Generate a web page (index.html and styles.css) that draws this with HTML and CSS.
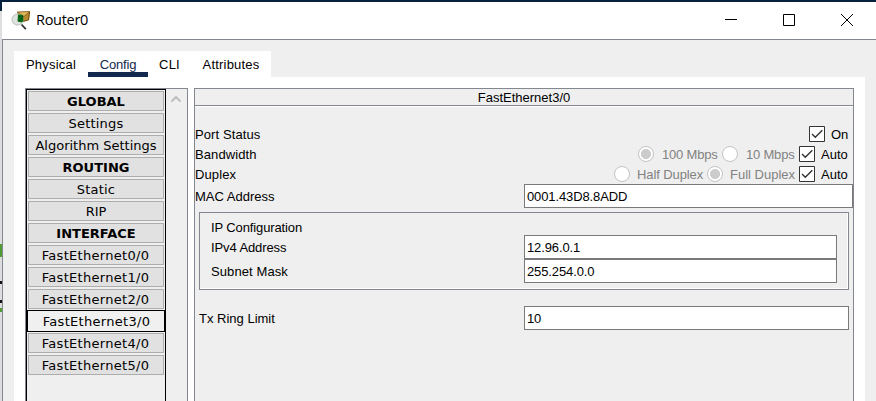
FILE: index.html
```html
<!DOCTYPE html>
<html lang="en">
<head>
<meta charset="utf-8">
<title>Router0</title>
<link rel="stylesheet" href="styles.css">
</head>
<body>
<div class="desktop">
  <div class="edge"><i class="edge-green"></i><i class="edge-dark"></i><i class="edge-dark second"></i><i class="edge-green small"></i></div>
  <div class="window">
    <header class="titlebar">
      <svg class="logo" width="20" height="21" viewBox="0 0 20 21">
        <path d="M6 2 19 1.500 18 10 9 12Z" fill="#b98b2d"/>
        <path d="M6 2 13 6.500 19 1.500Z" fill="#e0b85b" stroke="#6f4b12" stroke-width=".7"/>
        <path d="M18.500 2 17.500 10 12 11.500" fill="none" stroke="#704d16"/>
        <circle cx="6.500" cy="9.500" r="5.500" fill="#dfe3e0" stroke="#b7bdb8"/>
        <path d="M7 4.500 12 5 12.500 10 11 12.500 6.500 11.500Z" fill="#086d16"/>
        <path d="M8 6.500h1M10 8.500h1M8 10.500h1M11 6.500h1" stroke="#031"/>
        <path d="m10.500 14.500 4.300 4.700" stroke="#333" stroke-width="1.800"/>
      </svg>
      <h1>Router0</h1>
      <div class="controls">
        <svg width="12" height="12"><path d="M0 5.500h12" stroke="#000"/></svg>
        <svg width="12" height="12"><path d="M.5.5h11v11H.5z" fill="none" stroke="#000"/></svg>
        <svg width="12" height="12"><path d="m0 0 12 12M12 0 0 12" stroke="#000"/></svg>
      </div>
    </header>
    <div class="body">
    <nav class="tabs">
      <span class="tab physical">Physical</span><span class="tab config active">Config</span><span class="tab cli">CLI</span><span class="tab attributes">Attributes</span>
    </nav>
    <main class="page">
      <aside class="side">
        <div class="list">
          <div class="item head">GLOBAL</div>
          <div class="item short">Settings</div>
          <div class="item">Algorithm Settings</div>
          <div class="item head">ROUTING</div>
          <div class="item short">Static</div>
          <div class="item">RIP</div>
          <div class="item head">INTERFACE</div>
          <div class="item port">FastEthernet0/0</div>
          <div class="item port">FastEthernet1/0</div>
          <div class="item port">FastEthernet2/0</div>
          <div class="item port selected">FastEthernet3/0</div>
          <div class="item port">FastEthernet4/0</div>
          <div class="item port">FastEthernet5/0</div>
        </div>
        <svg class="up" width="12" height="8"><path d="m1.500 6.500 4.500-4.500 4.500 4.500" fill="none" stroke="#bfbfbf" stroke-width="2"/></svg>
      </aside>
      <section class="panel">
        <h2>FastEthernet3/0</h2>
        <div class="row first"><span>Port Status</span><svg class="check" viewBox="0 0 16 16"><path class="box" d="M.5.5h15v15H.5z"/><path class="tick" d="m3 8 3.300 3.300 7-7"/></svg><span class="opt on">On</span></div>
        <div class="row"><span>Bandwidth</span><i class="radio filled"></i><span class="opt muted mbps100">100 Mbps</span><i class="radio"></i><span class="opt muted mbps10">10 Mbps</span><svg class="check" viewBox="0 0 16 16"><path class="box" d="M.5.5h15v15H.5z"/><path class="tick" d="m3 8 3.300 3.300 7-7"/></svg><span class="opt auto">Auto</span></div>
        <div class="row"><span>Duplex</span><i class="radio"></i><span class="opt muted half">Half Duplex</span><i class="radio filled"></i><span class="opt muted full">Full Duplex</span><svg class="check" viewBox="0 0 16 16"><path class="box" d="M.5.5h15v15H.5z"/><path class="tick" d="m3 8 3.300 3.300 7-7"/></svg><span class="opt auto">Auto</span></div>
        <div class="field mac"><span>MAC Address</span><div class="input">0001.43D8.8ADD</div></div>
        <div class="group">
          <div class="legend">IP Configuration</div>
          <div class="field"><span>IPv4 Address</span><div class="input">12.96.0.1</div></div>
          <div class="field mask"><span>Subnet Mask</span><div class="input">255.254.0.0</div></div>
        </div>
        <div class="field ring"><span>Tx Ring Limit</span><div class="input">10</div></div>
      </section>
    </main>
    </div>
  </div>
</div>
</body>
</html>
```
FILE: styles.css
```css
* { box-sizing: border-box; }
body { margin: 0; overflow: hidden; font: 13px/22px "Liberation Sans", Arial, sans-serif; color: #000; }
h1, h2 { margin: 0; font-weight: 400; }
svg { display: block; flex: none; }
.desktop { display: flex; width: 876px; height: 401px; padding-top: 2px; background: #08213f; }
.edge { width: 2px; margin-top: 9px; padding-top: 233px; background: #dededf; }
.edge i { display: block; }
.edge-green { height: 13px; background: #4f9b35; }
.edge-dark { height: 3px; margin-top: 24px; background: #111; }
.edge-dark.second { margin-top: 16px; }
.edge-green.small { height: 4px; margin-top: 5px; }
.window { flex: 1; display: flex; flex-direction: column; background: #efefef; }
.titlebar { display: flex; height: 38px; flex: none; background: #fff; border-bottom: 1px solid #838790; }
.body { height: 361px; border-left: 1px solid #838790; }
.logo { margin: 8px 0 0 9px; }
h1 { margin: 8px 0 0 5px; font: 14.5px/20px "Open Sans", "Noto Sans", sans-serif; letter-spacing: -.28px; }
.controls { display: flex; gap: 46px; margin: 12px 23px 0 auto; }
.tabs { display: flex; width: 257px; height: 26px; margin: 11px 0 0 11px; background: #fff; letter-spacing: .2px; line-height: 27px; }
.tab { text-align: center; }
.physical { width: 74px; }
.config { width: 60px; letter-spacing: -.2px; }
.cli { width: 43px; }
.attributes { width: 80px; }
.active { color: #12294d; border-bottom: 5px solid #12294d; }
.page { display: flex; width: 851px; height: 324px; margin-left: 11px; padding: 11px 11px 0; background: #fff; }
.side { display: flex; width: 163px; height: 313px; border: 1px solid #838790; border-bottom: 0; background: #efefef; }
.list { width: 140px; border: 1px solid #000; border-bottom: 0; padding: 1px; display: grid; grid-auto-rows: 20px; gap: 2px; align-content: start; font-family: "DejaVu Sans", Verdana, sans-serif; }
.item { display: flex; align-items: center; justify-content: center; height: 20px; padding-top: 1px; border: 1px solid #adadad; background: #e1e1e1; line-height: 18px; white-space: nowrap; }
.head { font-weight: 700; }
.short { letter-spacing: .2px; }
.port { letter-spacing: .3px; padding-right: 1px; }
.selected { height: 22px; margin: -1px; padding: 2px 0 0 1px; background: #f0f0f0; border-color: #000; }
.up { margin: 6px 0 0 4px; }
.panel { width: 660px; height: 313px; margin-left: 6px; border: 1px solid #838790; border-bottom: 0; background: #efefef; }
h2 { height: 17px; font-size: 13px; line-height: 17px; text-align: center; border-bottom: 1px solid #838790; box-shadow: 0 1px #fff; }
.row { display: flex; align-items: center; height: 20px; padding-right: 2px; }
.row > span { padding-top: 1px; }
.row > span:first-child { margin-right: auto; letter-spacing: .1px; }
.row.first { margin-top: 18px; }
.check { width: 16px; height: 16px; }
.box { fill: #fff; stroke: #333; }
.tick { fill: none; stroke: #333; stroke-width: 1.4; }
.row > .opt { padding-left: 6px; white-space: nowrap; }
.on { width: 26px; }
.auto { width: 36px; }
.row > .muted { color: #828282; padding-left: 8px; letter-spacing: -.2px; }
.mbps100 { width: 68px; }
.mbps10 { width: 61px; }
.row > .half { width: 77px; padding-left: 7px; letter-spacing: -.1px; }
.row > .full { width: 76px; padding-left: 7px; letter-spacing: 0; }
.radio { width: 16px; height: 16px; flex: none; border: 1px solid #c3c3c3; border-radius: 50%; background: #fff; }
.filled { background: radial-gradient(circle, #ccc 0 4.7px, #fff 5.3px); }
.field { display: flex; height: 24px; line-height: 26px; }
.field > span { width: 329px; }
.input { flex: 1; height: 24px; padding-left: 2px; background: #fff; border: 1px solid #7a7a7a; line-height: 23px; letter-spacing: -.12px; }
.group { width: 650px; height: 78px; margin: 4px 0 0 4px; padding: 4px 11px 0; border: 1px solid #838790; box-shadow: inset -1px -1px #fff; }
.legend { height: 18px; line-height: 22px; letter-spacing: -.12px; }
.group .field > span { width: 313px; letter-spacing: -.1px; }
.group .mask > span { letter-spacing: .1px; }
.ring { margin: 16px 4px 0; }
.ring > span { width: 325px; }
```
